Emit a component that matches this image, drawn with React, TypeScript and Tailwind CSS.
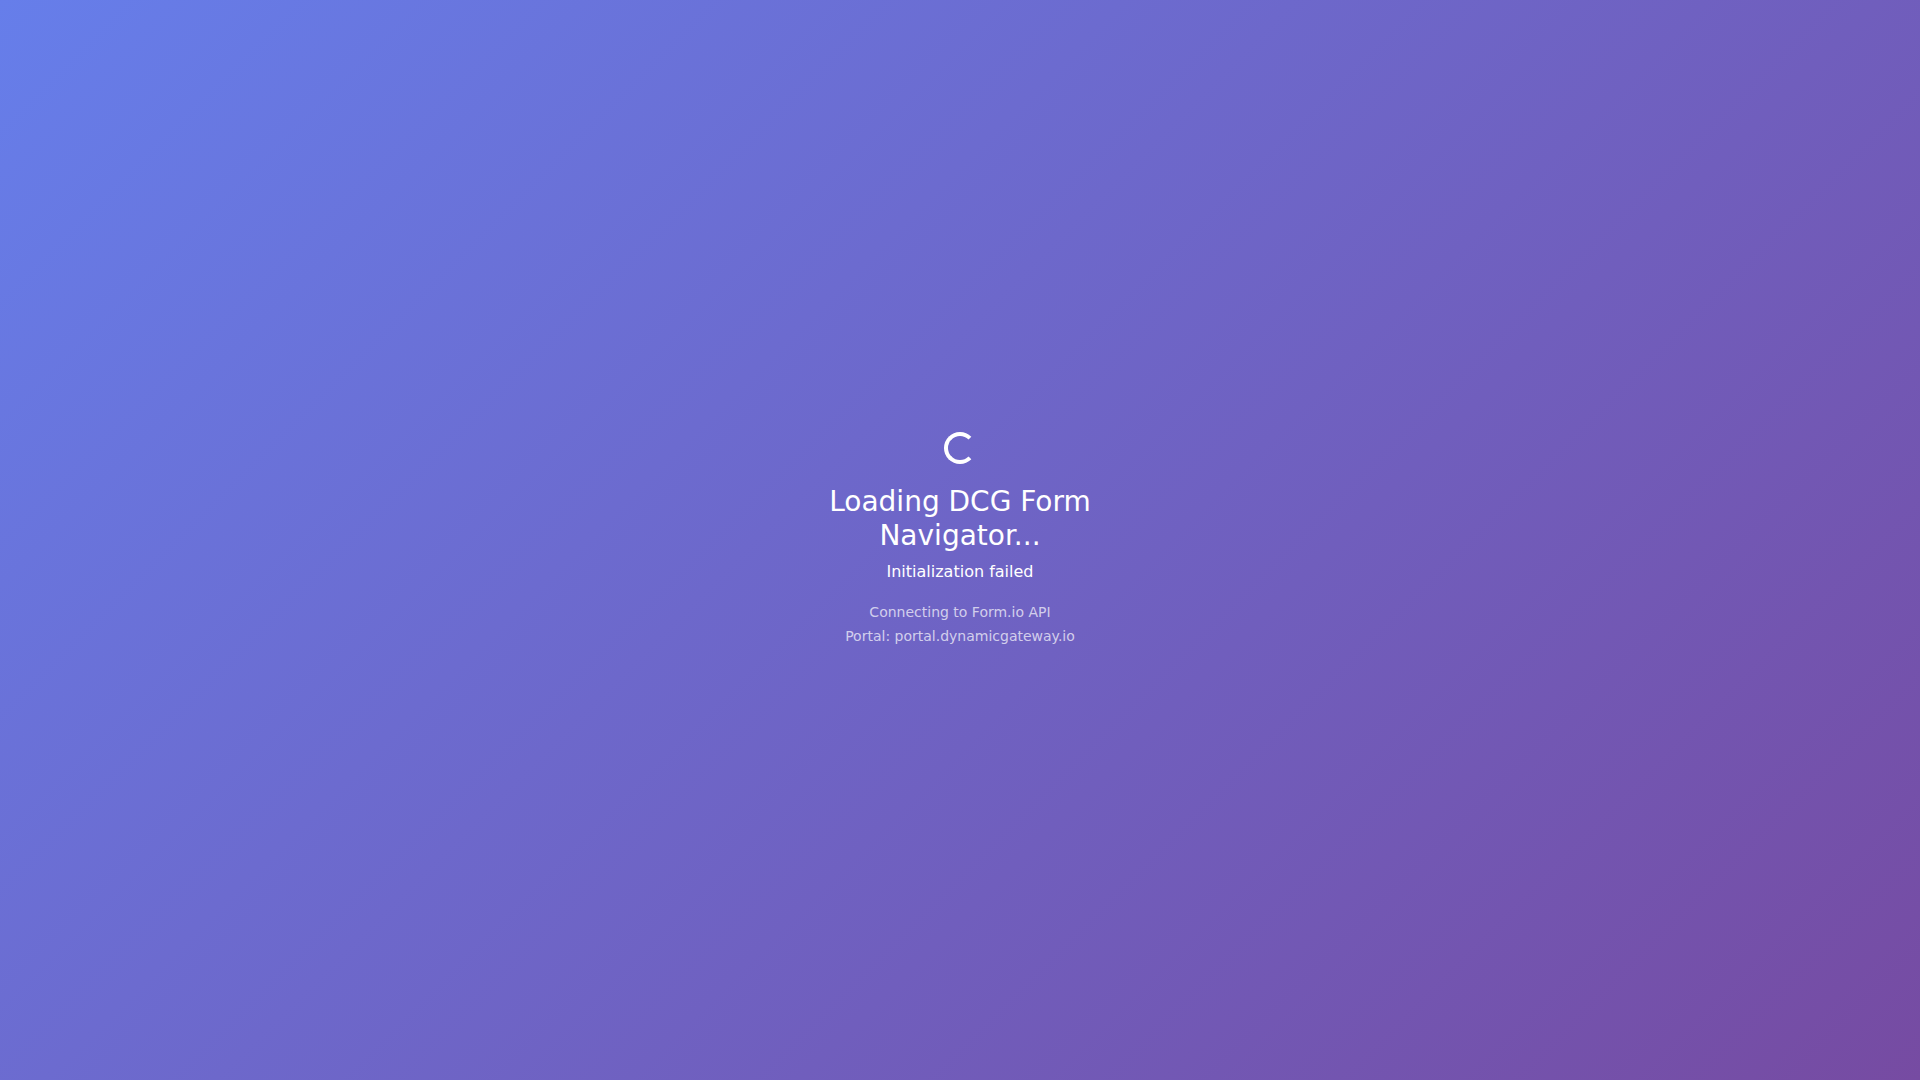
import React from 'react';

interface LoadingScreenProps {
  title: string;
  status: string;
  details: string[];
}

function Spinner() {
  return (
    <div
      className="w-8 h-8 rounded-full border-4 border-white border-r-transparent"
      aria-hidden="true"
    />
  );
}

function LoadingScreen({ title, status, details }: LoadingScreenProps) {
  return (
    <main className="min-h-screen flex items-center justify-center bg-[linear-gradient(135deg,#667eea_0%,#764ba2_100%)] text-white font-['DejaVu_Sans',sans-serif]">
      <div className="w-[300px] flex flex-col items-center text-center" role="status">
        <Spinner />
        <h1 className="mt-[21px] mb-[7px] text-[28px] leading-[34px]">{title}</h1>
        <p className="text-base leading-6">{status}</p>
        <div className="mt-4 text-sm leading-6 text-white/70">
          {details.map((line) => (
            <p key={line}>{line}</p>
          ))}
        </div>
      </div>
    </main>
  );
}

export default function App() {
  return (
    <LoadingScreen
      title="Loading DCG Form Navigator..."
      status="Initialization failed"
      details={['Connecting to Form.io API', 'Portal: portal.dynamicgateway.io']}
    />
  );
}
